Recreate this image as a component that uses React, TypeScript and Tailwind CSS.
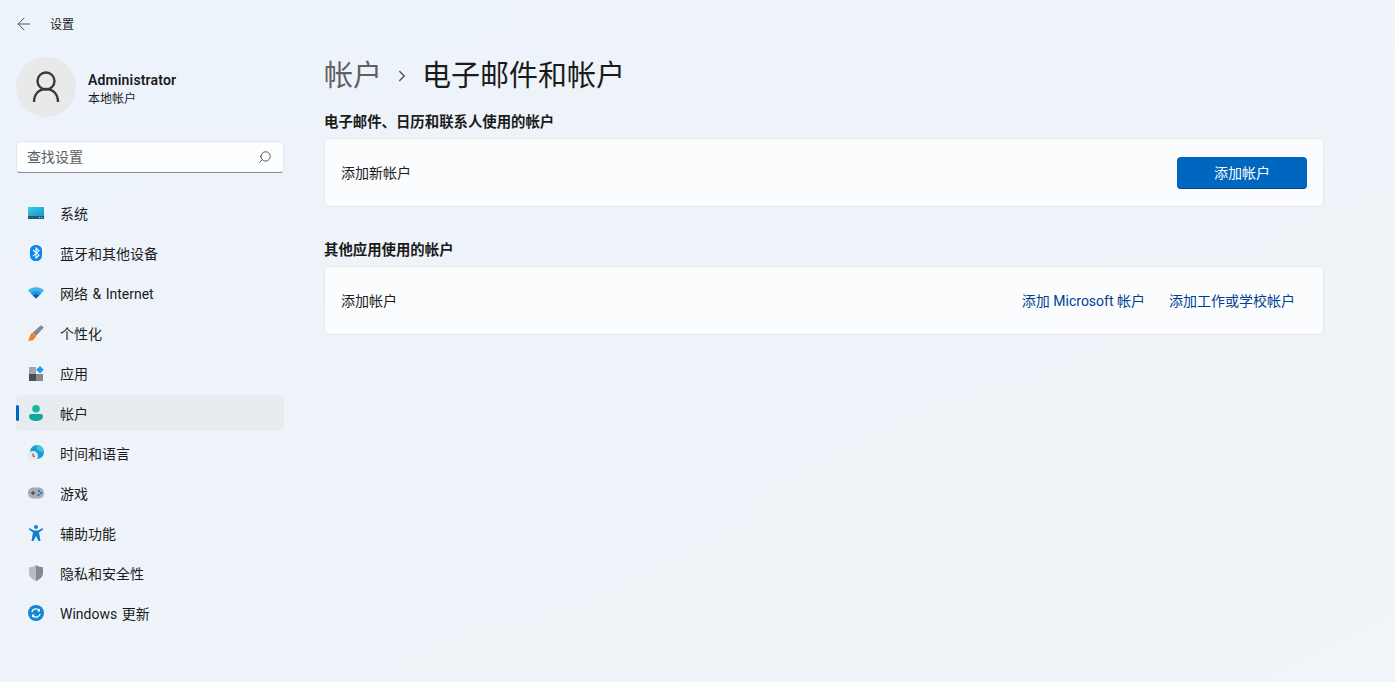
import type { ReactNode } from 'react';
import { ArrowLeft, ChevronRight, Search } from 'lucide-react';

const SystemIcon = () => (
  <svg width="16" height="12" viewBox="0 0 16 12">
    <defs>
      <linearGradient id="sys" x1="0" y1="0" x2="1" y2="1">
        <stop offset="0" stopColor="#3fd0e0" />
        <stop offset="1" stopColor="#1096d2" />
      </linearGradient>
    </defs>
    <rect width="16" height="8.500" fill="url(#sys)" />
    <rect y="8.500" width="16" height="3.500" fill="#14617a" />
    <rect x="11" y="10" width="1" height="1" fill="#b7e4ef" />
    <rect x="13" y="10" width="1" height="1" fill="#b7e4ef" />
  </svg>
);

const BluetoothIcon = () => (
  <svg width="12" height="16" viewBox="0 0 12 16">
    <rect width="12" height="16" rx="5.500" fill="#0a84ee" />
    <path d="M3 5l6 5.200L6 13V3l3 2.800L3 11" fill="none" stroke="#fff" strokeWidth="1.100" />
  </svg>
);

const WifiIcon = () => (
  <svg width="16" height="12" viewBox="0 0 16 12">
    <path d="M0 3.600C4.400-.8 11.600-.8 16 3.600l-2.400 2.500C10.500 3 5.500 3 2.400 6.100z" fill="#45b4ee" />
    <path d="M2.400 6.100C5.500 3 10.500 3 13.600 6.100l-2.300 2.300C9.400 6.600 6.600 6.600 4.700 8.400z" fill="#1c96e2" />
    <path d="M4.700 8.400C6.600 6.600 9.400 6.600 11.300 8.400L8 11.800z" fill="#0b5fa8" />
  </svg>
);

const BrushIcon = () => (
  <svg width="16" height="16" viewBox="0 0 16 16">
    <path d="M13 0.200 15.800 2.400 8 11 4.500 7.800z" fill="#85888c" />
    <path d="M4.500 7.800 8 11C7.200 14.500 3.500 16.200 0 15.800 1.800 14 1.500 8.800 4.500 7.800z" fill="#f2811d" />
  </svg>
);

const AppsIcon = () => (
  <svg width="15" height="15" viewBox="0 0 15 15">
    <rect y="1" width="7" height="7" fill="#a2a5a9" />
    <rect y="8" width="7" height="7" fill="#4b4d50" />
    <rect x="7" y="8" width="7" height="7" fill="#85888c" />
    <path d="M11 0l3.800 3.800L11 7.600 7.200 3.800z" fill="#1e9cf0" />
  </svg>
);

const UserIcon = () => (
  <svg width="14" height="16" viewBox="0 0 14 16">
    <circle cx="7" cy="3.800" r="3.800" fill="#19b5a7" />
    <path d="M0 11.500C0 9.800 1 9 2.500 9h9C13 9 14 9.800 14 11.500 14 14.500 10.500 16 7 16S0 14.500 0 11.500z" fill="#12a89b" />
  </svg>
);

const TimeIcon = () => (
  <svg width="16" height="16" viewBox="0 0 16 16">
    <circle cx="9" cy="7" r="7" fill="#1a9dd6" />
    <path d="M9 0a7 7 0 0 1 7 7c-3 0-6-1-7-3z" fill="#3fc8e4" />
    <circle cx="5" cy="11" r="5" fill="#e8e8e8" />
    <path d="M5 8.500V11.300h2" fill="none" stroke="#555" strokeWidth="1" />
  </svg>
);

const GameIcon = () => (
  <svg width="16" height="12" viewBox="0 0 16 12">
    <rect width="16" height="11" y="0.500" rx="5" fill="#a9adb3" />
    <path d="M3 6h4M5 4v4" stroke="#333" strokeWidth="1" />
    <rect x="10" y="3" width="2" height="2" fill="#1a7fd0" />
    <rect x="12" y="5" width="2" height="2" fill="#1a7fd0" />
    <rect x="9.500" y="7" width="2" height="2" fill="#1a7fd0" />
  </svg>
);

const AccessIcon = () => (
  <svg width="14" height="16" viewBox="0 0 14 16">
    <circle cx="7" cy="2" r="2" fill="#0f7fd0" />
    <path d="M0.500 3 5 5.500h4L13.500 3l.5 1.500L10 7.500 11.500 16H9.500L7 11 4.500 16H2.500L4 7.500 0 4.500z" fill="#0f7fd0" />
  </svg>
);

const ShieldIcon = () => (
  <svg width="14" height="16" viewBox="0 0 14 16">
    <path d="M7 0C9 1.500 11.500 2.200 14 2.200V8c0 4-3.500 6.500-7 8z" fill="#85888c" />
    <path d="M7 0C5 1.500 2.500 2.200 0 2.200V8c0 4 3.500 6.500 7 8z" fill="#b9bbbe" />
  </svg>
);

const UpdateIcon = () => (
  <svg width="16" height="16" viewBox="0 0 16 16">
    <circle cx="8" cy="8" r="8" fill="#0f86d8" />
    <path d="M3.800 7.200A4.300 4.300 0 0 1 11.400 5.500M12.200 8.800A4.300 4.300 0 0 1 4.600 10.500" fill="none" stroke="#fff" strokeWidth="1.300" />
    <path d="M12 3.500v3h-3zM4 12.500v-3h3z" fill="#fff" />
  </svg>
);

const navItems: { icon: ReactNode; label: string; active?: boolean }[] = [
  { icon: <SystemIcon />, label: '系统' },
  { icon: <BluetoothIcon />, label: '蓝牙和其他设备' },
  { icon: <WifiIcon />, label: '网络 & Internet' },
  { icon: <BrushIcon />, label: '个性化' },
  { icon: <AppsIcon />, label: '应用' },
  { icon: <UserIcon />, label: '帐户', active: true },
  { icon: <TimeIcon />, label: '时间和语言' },
  { icon: <GameIcon />, label: '游戏' },
  { icon: <AccessIcon />, label: '辅助功能' },
  { icon: <ShieldIcon />, label: '隐私和安全性' },
  { icon: <UpdateIcon />, label: 'Windows 更新' },
];

function Sidebar() {
  return (
    <aside className="w-[300px] shrink-0 px-4">
      <div className="mt-[9px] flex items-center gap-3">
        <div className="flex h-[60px] w-[60px] items-center justify-center rounded-full bg-[#e7e9ea]">
          <svg width="28" height="32" viewBox="0 0 28 32" fill="none" stroke="#3a3a3a" strokeWidth="2.400">
            <circle cx="14" cy="10" r="8.500" />
            <path d="M2 31c0-8 5-13 12-13s12 5 12 13" />
          </svg>
        </div>
        <div className="mt-[4px] flex flex-col">
          <span className="text-[14px] leading-[19px] font-semibold tracking-[0.15px] text-[#1b1b1b]">Administrator</span>
          <span className="text-[12px] leading-[18px] text-[#1b1b1b]">本地帐户</span>
        </div>
      </div>

      <div className="mt-[24px] flex h-[32px] items-center justify-between rounded-[4px] border border-[#e5e7ea] border-b-[#8a8a8a] bg-[#fcfdfe] pr-[11px] pl-[10px]">
        <span className="text-[14px] text-[#5d5d5d]">查找设置</span>
        <Search size={14} strokeWidth={1.500} className="-scale-x-100 text-[#444]" />
      </div>

      <nav className="mt-[22px] flex flex-col gap-1">
        {navItems.map(item => (
          <div
            key={item.label}
            className={`relative flex h-[36px] items-center rounded-[4px] ${item.active ? 'bg-[#e8ecf0]' : ''}`}
          >
            {item.active && (
              <span className="absolute top-[10px] left-0 h-[16px] w-[3px] rounded-full bg-[#0067c0]" />
            )}
            <span className="flex w-[44px] shrink-0 items-center justify-center pr-[4px]">{item.icon}</span>
            <span className="mt-[2px] text-[14px] [word-spacing:1px] text-[#1b1b1b]">{item.label}</span>
          </div>
        ))}
      </nav>
    </aside>
  );
}

function Card({ children }: { children: ReactNode }) {
  return (
    <div className="flex h-[69px] items-center justify-between rounded-[4px] border border-[#e5e7ea] bg-[#fbfcfe] pr-4 pl-4">
      {children}
    </div>
  );
}

export default function App() {
  return (
    <div className="h-[682px] w-[1395px] overflow-hidden bg-gradient-to-br from-[#edf3fb] to-[#f1f4f8] font-['Roboto','Noto_Sans_CJK_SC',sans-serif]">
      <header className="flex h-[48px] items-center pl-[14px]">
        <ArrowLeft size={20} strokeWidth={1.200} className="text-[#555]" />
        <span className="mt-[1px] ml-[16px] text-[12px] text-[#1b1b1b]">设置</span>
      </header>

      <div className="flex">
        <Sidebar />

        <main className="w-[1000px] pl-[24px]">
          <div className="mt-[8px] flex h-[40px] items-center text-[29px] leading-[40px]">
            <span className="text-[#5f6062]">帐户</span>
            <ChevronRight size={18} strokeWidth={2} className="mx-[11px] mt-[-1px] text-[#555]" />
            <span className="text-[#1b1b1b]">电子邮件和帐户</span>
          </div>

          <div className="w-[1000px]">
            <h2 className="mt-[17px] mb-[5px] text-[14.4px] leading-[20px] font-semibold text-[#1b1b1b]">
              电子邮件、日历和联系人使用的帐户
            </h2>
            <Card>
              <span className="mt-[2px] text-[14px] text-[#1b1b1b]">添加新帐户</span>
              <button className="flex h-[32px] w-[130px] items-center justify-center rounded-[4px] border-b border-b-[#00427a] bg-[#0067c0] pt-[3px] text-[14px] text-white">
                添加帐户
              </button>
            </Card>

            <h2 className="mt-[34px] mb-[5px] text-[14.4px] leading-[20px] font-semibold text-[#1b1b1b]">
              其他应用使用的帐户
            </h2>
            <Card>
              <span className="mt-[2px] text-[14px] text-[#1b1b1b]">添加帐户</span>
              <div className="mt-[2px] flex items-center gap-[24px] pr-[12px] text-[14px] text-[#003e92]">
                <span>添加 Microsoft 帐户</span>
                <span>添加工作或学校帐户</span>
              </div>
            </Card>
          </div>
        </main>
      </div>
    </div>
  );
}
